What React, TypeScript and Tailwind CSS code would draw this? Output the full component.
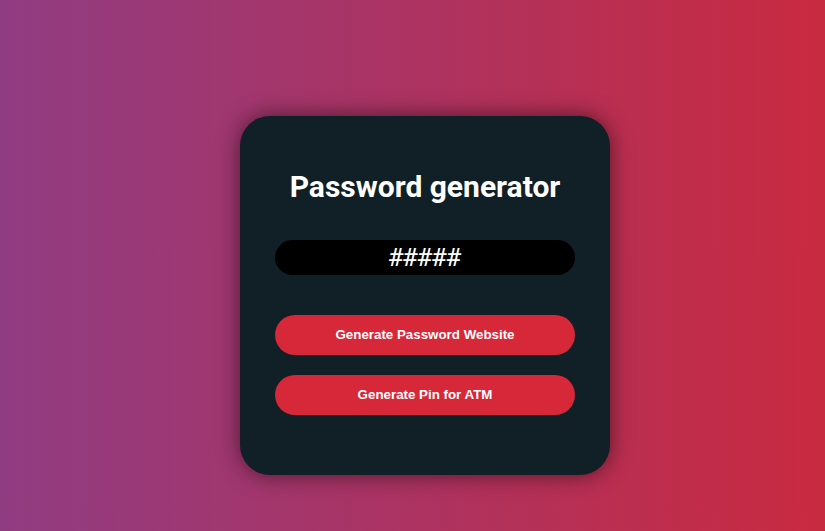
import React from 'react';

const App: React.FC = () => {
  return (
    <div className="min-h-[531px] w-full bg-[linear-gradient(to_right,#903c82,#c92a40)] pt-[116px] pl-[240px]">
      {/* Card */}
      <div className="w-[370px] h-[359px] rounded-[30px] bg-[#111f27] shadow-[0_0_22px_rgba(0,0,0,0.55)] px-[35px] pt-[52px]">
        <h1 className="text-center text-white font-bold text-[30px] leading-[38px] font-['Roboto',sans-serif]">
          Password generator
        </h1>
        <div className="mt-[34px] h-[35px] rounded-full bg-black flex items-center justify-center">
          <span className="text-white text-[24px] font-['DejaVu_Sans_Mono',monospace] leading-none">#####</span>
        </div>
        <div className="mt-[40px] flex flex-col gap-[20px]">
          <button className="h-[40px] w-full rounded-full bg-[#d62839] text-white text-[13.33px] font-bold font-['Liberation_Sans',Arial,sans-serif]">
            Generate Password Website
          </button>
          <button className="h-[40px] w-full rounded-full bg-[#d62839] text-white text-[13.33px] font-bold font-['Liberation_Sans',Arial,sans-serif]">
            Generate Pin for ATM
          </button>
        </div>
      </div>
    </div>
  );
};

export default App;
